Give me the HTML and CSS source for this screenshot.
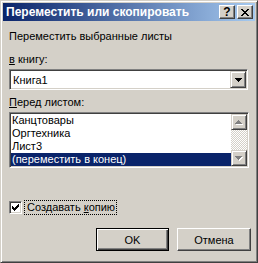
FILE: index.html
```html
<!DOCTYPE html>
<html lang="ru">
<head>
    <meta charset="UTF-8">
    <title>Переместить или скопировать</title>
    <link rel="stylesheet" href="styles.css">
</head>
<body>
    <div class="window">
        <div class="caption">
            <span class="caption-title">Переместить или скопировать</span>
            <button class="cap-btn help">?</button>
            <button class="cap-btn close">
                <svg width="8" height="7" viewBox="0 0 8 7" shape-rendering="crispEdges"><path fill="#000" d="M0 0h2v1h-2zM6 0h2v1h-2zM1 1h2v1h-2zM5 1h2v1h-2zM2 2h4v1h-4zM3 3h2v1h-2zM2 4h4v1h-4zM1 5h2v1h-2zM5 5h2v1h-2zM0 6h2v1h-2zM6 6h2v1h-2z"/></svg>
            </button>
        </div>
        <div class="client">
            <div class="prompt">Переместить выбранные листы</div>
            <div class="field-label"><u>в</u> книгу:</div>
            <div class="combo">
                <span class="combo-text">Книга1</span>
                <span class="arrow-btn">
                    <svg width="7" height="4" viewBox="0 0 7 4" shape-rendering="crispEdges"><path fill="#000" d="M0 0h7v1h-7zM1 1h5v1h-5zM2 2h3v1h-3zM3 3h1v1h-1z"/></svg>
                </span>
            </div>
            <div class="field-label"><u>П</u>еред листом:</div>
            <div class="listbox">
                <ul class="list-items">
                    <li>Канцтовары</li>
                    <li>Оргтехника</li>
                    <li>Лист3</li>
                    <li class="selected">(переместить в конец)</li>
                </ul>
                <div class="scrollbar">
                    <span class="arrow-btn">
                        <svg width="8" height="5" viewBox="0 0 8 5" shape-rendering="crispEdges"><path fill="#fff" d="M4 1h1v1h-1zM3 2h3v1h-3zM2 3h5v1h-5zM1 4h7v1h-7z"/><path fill="#808080" d="M3 0h1v1h-1zM2 1h3v1h-3zM1 2h5v1h-5zM0 3h7v1h-7z"/></svg>
                    </span>
                    <span class="track"></span>
                    <span class="arrow-btn">
                        <svg width="8" height="5" viewBox="0 0 8 5" shape-rendering="crispEdges"><path fill="#fff" d="M1 1h7v1h-7zM2 2h5v1h-5zM3 3h3v1h-3zM4 4h1v1h-1z"/><path fill="#808080" d="M0 0h7v1h-7zM1 1h5v1h-5zM2 2h3v1h-3zM3 3h1v1h-1z"/></svg>
                    </span>
                </div>
            </div>
            <div class="check">
                <span class="check-box">
                    <svg width="7" height="7" viewBox="0 0 7 7" shape-rendering="crispEdges"><path fill="#000" d="M6 0h1v1h-1zM5 1h2v1h-2zM0 2h1v1h-1zM4 2h3v1h-3zM0 3h2v1h-2zM3 3h3v1h-3zM0 4h5v1h-5zM1 5h3v1h-3zM2 6h1v1h-1z"/></svg>
                </span>
                <span class="check-label">Создавать <u>к</u>опию</span>
            </div>
            <div class="actions">
                <button class="btn default">OK</button>
                <button class="btn">Отмена</button>
            </div>
        </div>
    </div>
</body>
</html>
```

FILE: styles.css
```css
body {
    margin: 0;
    font-family: "Liberation Sans", Arial, sans-serif;
    font-size: 11px;
    color: #000;
    background: #d4d0c8;
}
.window {
    width: 258px;
    height: 263px;
    box-sizing: border-box;
    background: #d4d0c8;
    border: 1px solid;
    border-color: #d4d0c8 #404040 #404040 #d4d0c8;
    box-shadow: inset 1px 1px #fff, inset -1px -1px #808080;
    padding: 2px;
    display: flex;
    flex-direction: column;
}
.caption {
    height: 18px;
    flex-shrink: 0;
    display: flex;
    align-items: center;
    padding: 0 2px 0 3px;
    background: linear-gradient(to right, #0a246a, #a6caf0);
    color: #fff;
    font-weight: bold;
    font-size: 12px;
}
.caption-title {
    flex: 1;
    white-space: nowrap;
}
.cap-btn {
    width: 16px;
    height: 14px;
    box-sizing: border-box;
    margin: 0;
    padding: 0;
    display: flex;
    align-items: center;
    justify-content: center;
    background: #d4d0c8;
    border: 1px solid;
    border-color: #fff #404040 #404040 #fff;
    box-shadow: inset -1px -1px #808080;
    font: bold 12px "Liberation Sans", Arial, sans-serif;
    color: #000;
}
.cap-btn.help {
    margin-right: 2px;
}
.client {
    flex: 1;
    display: flex;
    flex-direction: column;
    padding: 0 4px 0 6px;
}
.prompt, .field-label {
    height: 13px;
    line-height: 13px;
    white-space: nowrap;
}
.prompt {
    margin-top: 9px;
}
.field-label {
    margin-top: 10px;
}
.combo {
    margin-top: 3px;
    width: 239px;
    height: 21px;
    box-sizing: border-box;
    display: flex;
    align-items: center;
    background: #fff;
    border: 1px solid;
    border-color: #808080 #fff #fff #808080;
    box-shadow: inset 1px 1px #404040, inset -1px -1px #d4d0c8;
    padding: 1px;
}
.combo-text {
    flex: 1;
    padding-left: 2px;
}
.arrow-btn {
    width: 16px;
    height: 17px;
    box-sizing: border-box;
    display: flex;
    align-items: center;
    justify-content: center;
    background: #d4d0c8;
    border: 1px solid;
    border-color: #d4d0c8 #404040 #404040 #d4d0c8;
    box-shadow: inset 1px 1px #fff, inset -1px -1px #808080;
}
.combo + .field-label {
    margin-top: 6px;
}
.listbox {
    margin-top: 3px;
    width: 240px;
    height: 56px;
    box-sizing: border-box;
    display: flex;
    background: #fff;
    border: 1px solid;
    border-color: #808080 #fff #fff #808080;
    box-shadow: inset 1px 1px #404040, inset -1px -1px #d4d0c8;
    padding: 1px;
}
.list-items {
    flex: 1;
    list-style: none;
    margin: 0;
    padding: 0;
}
.list-items li {
    height: 13px;
    line-height: 13px;
    padding-left: 1px;
    white-space: nowrap;
}
.list-items .selected {
    background: #0a246a;
    color: #fff;
}
.scrollbar {
    width: 16px;
    display: flex;
    flex-direction: column;
}
.scrollbar .arrow-btn {
    height: 16px;
}
.track {
    flex: 1;
    background: repeating-conic-gradient(#fff 0 25%, #d4d0c8 0 50%) 0 0 / 2px 2px;
}
.check {
    margin-top: 32px;
    display: flex;
    align-items: center;
}
.check-box {
    width: 13px;
    height: 13px;
    box-sizing: border-box;
    display: flex;
    align-items: center;
    justify-content: center;
    background: #fff;
    border: 1px solid;
    border-color: #808080 #fff #fff #808080;
    box-shadow: inset 1px 1px #404040, inset -1px -1px #d4d0c8;
}
.check-label {
    margin-left: 2px;
    padding: 0 1px 0 2px;
    height: 13px;
    line-height: 13px;
    border: 1px dotted #000;
}
.actions {
    margin-top: 13px;
    display: flex;
    justify-content: flex-end;
    gap: 8px;
}
.btn {
    width: 74px;
    height: 23px;
    box-sizing: border-box;
    margin: 0;
    padding: 0;
    font: 11px "Liberation Sans", Arial, sans-serif;
    color: #000;
    background: #d4d0c8;
    border: 1px solid;
    border-color: #fff #404040 #404040 #fff;
    box-shadow: inset -1px -1px #808080;
}
.btn.default {
    width: 73px;
    border-color: #000;
    box-shadow: inset 1px 1px #fff, inset -1px -1px #404040, inset -2px -2px #808080;
}
```
